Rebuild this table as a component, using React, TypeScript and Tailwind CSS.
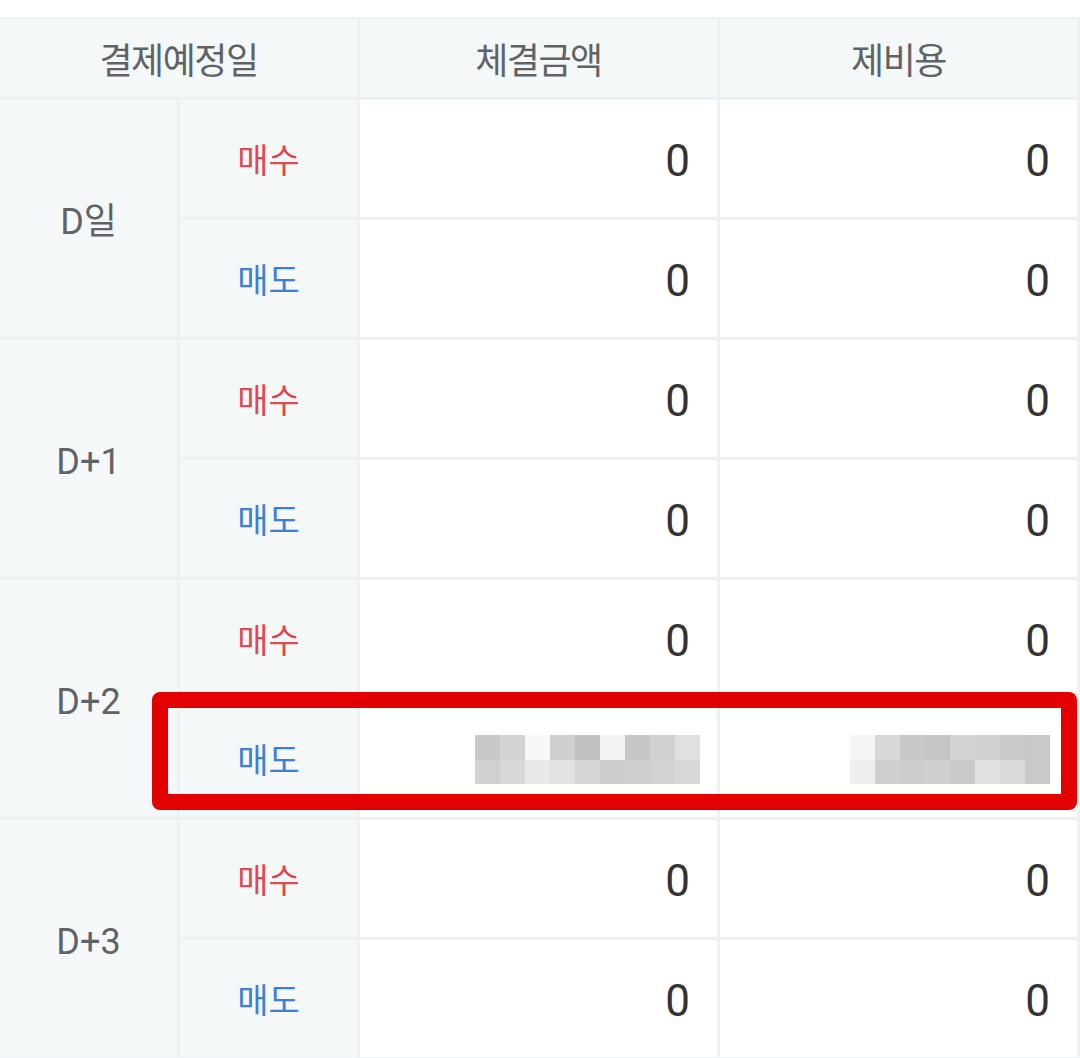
import React from "react";

const FONT = "font-['Roboto','Noto_Sans_CJK_KR',sans-serif]";

const row3 = [
  ["#c8c8c8", "#d2d2d2", "#f8f8f8", "#cecece", "#c2c2c2", "#f3f3f3", "#c5c6c5", "#d0d0d0", "#e0e0e0"],
  ["#d0d0d0", "#d8d8d8", "#e8e8e8", "#e2e2e2", "#d6d6d6", "#cdcdcd", "#cfcfcf", "#d2d2d2", "#d8d8d8"],
];
const row4 = [
  ["#f5f5f5", "#d8d8d8", "#c8c8c8", "#c5c5c5", "#d4d4d4", "#d0d0d0", "#cbcbcb", "#c9c9c9"],
  ["#efefef", "#cfcfcf", "#cdcdcd", "#cecece", "#cacaca", "#e0e0e0", "#dadada", "#c9c9c9"],
];

function Mosaic({ rows }: { rows: string[][] }) {
  return (
    <div className="flex flex-col">
      {rows.map((r, i) => (
        <div key={i} className={i === 0 ? "flex h-[25px]" : "flex h-[24px]"}>
          {r.map((c, j) => (
            <div key={j} className="w-[25px] h-full" style={{ backgroundColor: c }} />
          ))}
        </div>
      ))}
    </div>
  );
}

const groups = ["D일", "D+1", "D+2", "D+3"];

export default function App() {
  const cellB = "border-r-[3px] border-b-[3px] border-[#eef1f3]";
  const head = `${cellB} h-[81px] bg-[#f5f8f9] flex items-center justify-center pt-[7px] text-[36px] tracking-[-1.5px] text-[#5f6366]`;
  return (
    <div className={`relative w-[1080px] h-[1058px] overflow-hidden bg-white ${FONT}`}>
      <div className="mt-[17px] border-t-2 border-[#eef1f3]">
        <div className="grid grid-cols-[360px_360px_360px]">
          <div className={head}>결제예정일</div>
          <div className={head}>체결금액</div>
          <div className={head}>제비용</div>
        </div>
        {groups.map((g, gi) => (
          <div key={g} className="grid grid-cols-[180px_180px_360px_360px] grid-rows-[120px_120px]">
            <div className={`${cellB} row-span-2 bg-[#f5f8f9] flex items-center justify-center pt-[6px] text-[36px] text-[#5f6366]`}>
              {g}
            </div>
            {["매수", "매도"].map((t, ti) => {
              const masked = gi === 2 && ti === 1;
              return (
                <React.Fragment key={t}>
                  <div
                    className={`${cellB} bg-[#f5f8f9] flex items-center justify-center pt-[6px] text-[34px] ${
                      t === "매수" ? "text-[#dd4a50]" : "text-[#3d80d4]"
                    }`}
                  >
                    {t}
                  </div>
                  <div
                    className={`${cellB} bg-white flex items-center justify-end ${
                      masked ? "pr-[17px] pt-[1px]" : "pr-[27px] pt-[5px]"
                    } text-[44px] text-[#333333]`}
                  >
                    {masked ? <Mosaic rows={row3} /> : "0"}
                  </div>
                  <div
                    className={`${cellB} bg-white flex items-center justify-end pr-[27px] ${
                      masked ? "pt-[1px]" : "pt-[5px]"
                    } text-[44px] text-[#333333]`}
                  >
                    {masked ? <Mosaic rows={row4} /> : "0"}
                  </div>
                </React.Fragment>
              );
            })}
          </div>
        ))}
      </div>
      <div className="absolute left-[152px] top-[692px] w-[925px] h-[118px] border-[16px] border-[#e30000] rounded-[8px]" />
    </div>
  );
}
